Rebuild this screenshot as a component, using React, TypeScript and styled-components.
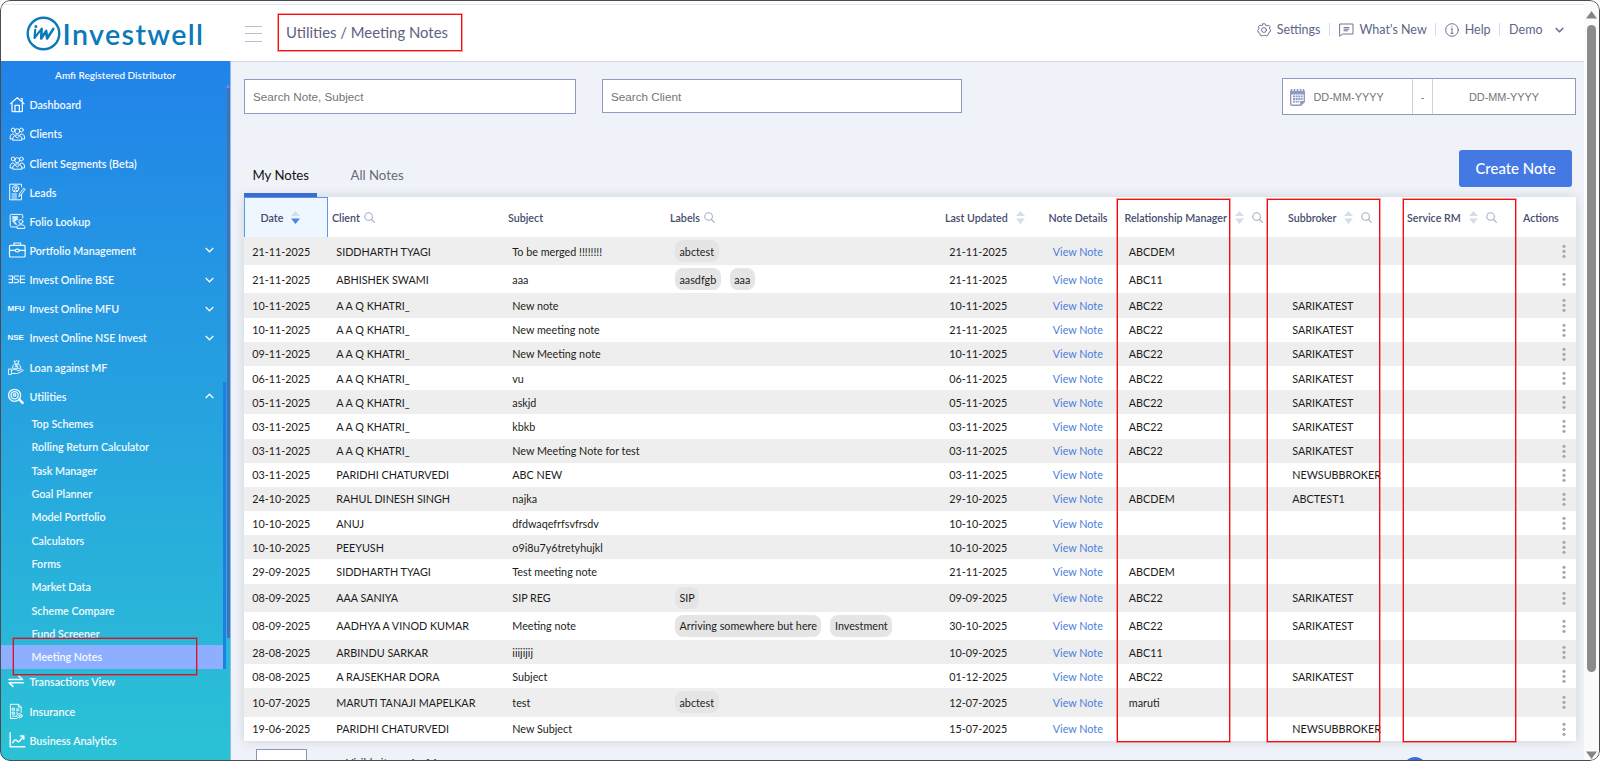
import React from "react";
import styled, { createGlobalStyle, css } from "styled-components";

const GlobalStyle = createGlobalStyle`
  * { box-sizing: border-box; }
  body { margin: 0; background: #fff; font-family: Lato, "Open Sans", sans-serif; }
`;

const Frame = styled.div`
  position: relative;
  display: flex;
  width: 1600px;
  height: 761px;
  overflow: hidden;
  border-radius: 10px;
  background: #eff3f9;
  &::after {
    content: "";
    position: absolute;
    inset: 0;
    border: 1px solid #4c4c50;
    border-radius: 10px;
    pointer-events: none;
  }
`;
const Page = styled.div`
  flex: 1;
  display: flex;
  flex-direction: column;
  min-width: 0;
`;

const Header = styled.header`
  display: flex;
  align-items: center;
  height: 62px;
  flex: none;
  background: #fff;
  border-bottom: 1px solid #d3d8e6;
  box-shadow: inset 0 4px 0 #fdfdff, inset 0 5px 0 #e6e6f2;
`;
const Brand = styled.div`
  display: flex;
  align-items: center;
  width: 245px;
  padding: 6px 0 0 26px;
  color: #0a7ab9;
  svg { flex: none; }
`;
const BrandName = styled.span`
  margin: 0 0 0 1.5px;
  font-size: 28.6px;
  line-height: 34px;
  font-weight: 600;
  letter-spacing: 1.4px;
`;
const Burger = styled.div`
  width: 17px;
  height: 16px;
  margin-top: 6px;
  border-top: 1.5px solid #b9bfd2;
  border-bottom: 1.5px solid #b9bfd2;
  display: flex;
  align-items: center;
  &::after { content: ""; width: 100%; height: 1px; background: #b9bfd2; }
`;
const Crumb = styled.div`
  margin: 3px 0 0 24px;
  font-size: 14.87px;
  color: #5d6180;
  white-space: pre;
`;
const TopNav = styled.nav`
  display: flex;
  align-items: center;
  margin: 0 11.5px 2px auto;
  font-size: 12.5px;
  color: #5d6588;
`;
const NavItem = styled.div<{ $gap?: number }>`
  display: flex;
  align-items: center;
  gap: ${(p) => p.$gap ?? 5.5}px;
  height: 13px;
  padding: 0 8.5px 0 9px;
  & + & { border-left: 1px solid #d9dce8; }
  white-space: nowrap;
`;

const Body = styled.div`
  display: flex;
  flex: 1;
  min-height: 0;
`;
const Sidebar = styled.aside`
  position: relative;
  display: flex;
  flex-direction: column;
  width: 231px;
  flex: none;
  margin-top: -1px;
  padding-top: 29.2px;
  background: linear-gradient(#2183e9, #2bc2d5);
  border-right: 1px solid #8fbde6;
  color: #f4faff;
`;
const Role = styled.div`
  position: absolute;
  top: 7px;
  left: 0;
  width: 231px;
  text-align: center;
  font-size: 9.97px;
  line-height: 14px;
  font-weight: 600;
`;
const MenuItem = styled.div`
  display: flex;
  align-items: center;
  height: 29.15px;
  flex: none;
  padding: 0 16.5px 0 8px;
  font-size: 10.75px;
  font-weight: 600;
`;
const IconSlot = styled.span`
  display: flex;
  align-items: center;
  width: 21.4px;
  flex: none;
`;
const Exchange = styled.span`
  font: 700 8px "Liberation Sans", sans-serif;
  margin-left: -0.5px;
`;
const Chevron = styled.svg`
  margin-left: auto;
`;
const SubMenu = styled.div`
  position: relative;
  width: 226px;
  flex: none;
  border-right: 3px solid #1b7fe8;
  margin: -28.5px 0 -1.2px;
  padding-top: 29.6px;
`;
const SubItem = styled.div<{ $active?: boolean }>`
  display: flex;
  align-items: center;
  height: 23.35px;
  padding-left: 31.5px;
  font-size: 10.72px;
  font-weight: 600;
  ${(p) => p.$active && css`background: #8eafff;`}
`;
const SideScroll = styled.div`
  position: absolute;
  top: 27px;
  right: 0;
  width: 3px;
  height: 550px;
  background: #4272b4;
  &::before {
    content: "";
    position: absolute;
    top: -4px;
    right: 0;
    border: 2px solid transparent;
    border-top: 0;
    border-bottom: 4px solid #7c85d8;
  }
`;

const Main = styled.main`
  display: flex;
  flex-direction: column;
  flex: 1;
  min-width: 0;
  padding: 16px 8px 0 13px;
  & > * { flex-shrink: 0; }
`;
const Filters = styled.div`
  display: flex;
  align-items: flex-start;
`;
const Field = styled.div<{ $w: number; $h: number }>`
  display: flex;
  align-items: center;
  width: ${(p) => p.$w}px;
  height: ${(p) => p.$h}px;
  margin: 1px 26px 0 0;
  padding-left: 8px;
  border: 1px solid #8d9bc0;
  background: #fff;
  color: #757575;
  font: 11.7px "Liberation Sans", Arial, sans-serif;
`;
const DateRange = styled.div`
  display: flex;
  width: 294px;
  height: 37px;
  margin-left: auto;
  border: 1px solid #8d9bc0;
  background: #fff;
  color: #757575;
  font: 10.9px "Liberation Sans", Arial, sans-serif;
`;
const DateCell = styled.div<{ $w?: number }>`
  display: flex;
  align-items: center;
  justify-content: ${(p) => (p.$w ? "flex-start" : "center")};
  ${(p) => (p.$w ? css`width: ${p.$w}px; padding-left: 6px; gap: 7.5px;` : css`flex: 1;`)}
  padding-top: 1px;
`;
const Dash = styled.div`
  display: flex;
  align-items: center;
  justify-content: center;
  width: 21px;
  border: solid #cbd3e6;
  border-width: 0 1px;
`;
const TabBar = styled.div`
  display: flex;
  height: 82px;
  align-items: flex-end;
`;
const Tab = styled.div<{ $active?: boolean }>`
  width: 73px;
  height: 36px;
  padding: 6px 0 0 8.5px;
  margin-right: 25px;
  font-size: 13.2px;
  color: ${(p) => (p.$active ? "#111" : "#666a78")};
  border-bottom: 4px solid ${(p) => (p.$active ? "#3a70da" : "transparent")};
  white-space: nowrap;
`;
const CreateButton = styled.button`
  width: 113px;
  height: 37px;
  margin: 0 4px 10.5px auto;
  padding: 0;
  border: 0;
  border-radius: 3px;
  background: #4479e4;
  color: #fff;
  font: 500 14.93px Lato, sans-serif;
`;

const Table = styled.div`
  width: 1332px;
  background: #fff;
  box-shadow: 0 0 10px rgba(70, 80, 90, 0.2);
`;
const columns = css`
  display: grid;
  grid-template-columns: 84px 176px 162px 275px 103.5px 76px 163.5px 119px 116px 57px;
`;
const HeadRow = styled.div`
  ${columns}
  height: 40px;
`;
const HeadCell = styled.div<{ $sorted?: boolean }>`
  display: flex;
  align-items: center;
  padding-left: 4px;
  gap: 8px;
  color: #444c6e;
  font-size: 10.68px;
  font-weight: 600;
  white-space: nowrap;
  ${(p) =>
    p.$sorted &&
    css`
      padding-left: 15.5px;
      background: #eef6ff;
      border: solid #5e95e8;
      border-width: 1px 1px 0;
    `}
`;
const SearchOnly = styled.span`
  display: flex;
  margin-left: -4px;
`;
const Row = styled.div<{ $tall: boolean }>`
  ${columns}
  height: ${(p) => (p.$tall ? 28.2 : 24.2)}px;
  color: #1c1c20;
  font-size: 10.77px;
  &:nth-child(even) { background: #eeeeee; }
`;
const Cell = styled.div`
  display: flex;
  align-items: center;
  gap: 9px;
  padding-left: 8.3px;
  white-space: nowrap;
`;
const LabelCell = styled(Cell)`
  padding-left: 9px;
`;
const Link = styled.a`
  color: #4a7de0;
`;
const Pill = styled.span`
  display: flex;
  align-items: center;
  height: 22px;
  padding: 0 4.5px;
  border-radius: 8px;
  background: #e5e5e5;
`;
const ActionCell = styled(Cell)`
  padding-left: 42.7px;
`;
const Pager = styled.div`
  display: flex;
  align-items: flex-start;
  padding: 8px 149px 0 12px;
  font-size: 11px;
  color: #333;
`;
const PageSize = styled.div`
  width: 51px;
  height: 24px;
  border: 1px solid #8d93bf;
  background: #fff;
`;
const PageInfo = styled.div`
  margin: 7px 0 0 39px;
`;
const PageDot = styled.div`
  width: 24px;
  height: 24px;
  margin: 8px 0 0 auto;
  border-radius: 50%;
  background: #3a70da;
`;

const Scrollbar = styled.div`
  display: flex;
  flex-direction: column;
  align-items: center;
  width: 16px;
  flex: none;
  padding: 11px 1px 2px 0;
  background: #fbfbfc;
`;
const Thumb = styled.div`
  width: 9.5px;
  height: 647px;
  margin: 6px 0 auto;
  border-radius: 5px;
  background: #8b8b8b;
`;

const Marker = styled.div<{ $x: number; $y: number; $w: number; $h: number; $dark?: boolean }>`
  position: absolute;
  left: ${(p) => p.$x}px;
  top: ${(p) => p.$y}px;
  width: ${(p) => p.$w}px;
  height: ${(p) => p.$h}px;
  border: 1px solid ${(p) => (p.$dark ? "#d3122c" : "#fb0a0e")};
  box-shadow: 0 0 0 1px rgba(240, 20, 20, 0.4);
  pointer-events: none;
`;

const Svg = ({ s = 16, w = 1.1, vb = 16, children }: { s?: number; w?: number; vb?: number; children: React.ReactNode }) => (
  <svg width={s} height={s} viewBox={`0 0 ${vb} ${vb}`} fill="none" stroke="currentColor" strokeWidth={w} strokeLinecap="round" strokeLinejoin="round">
    {children}
  </svg>
);

const HomeIcon = () => (
  <Svg s={18} vb={18} w={1.25}>
    <path d="M2.5 7.6 9.2 1.7l6.8 5.9M4 7v7.7q0 1 1 1h8.4q1 0 1-1V7M7 15.5V9.3h4.4v6.2M12.9 2.6h1.3v2.7" />
  </Svg>
);
const PeopleIcon = () => (
  <Svg s={18} vb={18} w={1}>
    <circle cx="9.3" cy="6.2" r="2.5" />
    <circle cx="5.2" cy="5" r="1.9" />
    <circle cx="13.4" cy="5" r="1.9" />
    <path d="M4.7 14.8q-.3-4.7 4.6-4.9 4.9.2 4.6 4.9zM4.6 14H2q-.6-4.6 2.7-5.2l1.6.9M14 14h2.6q.6-4.6-2.7-5.2l-1.6.9M7 11l2.3 2 2.3-2" />
  </Svg>
);
const LeadsIcon = () => (
  <Svg s={18} vb={18} w={1}>
    <path d="M13.5 11v5.8H1.7V1.2h11.8V4M4 11h4.5M4 13h4.5M4 15h4.5M11 13.2l.5-2.4 4.2-5.6 1.5 1.1-4.2 5.6z" />
    <circle cx="7.6" cy="5.7" r="3.2" />
    <circle cx="7.6" cy="4.9" r="1" />
    <path d="M5.7 8q1.9-2.6 3.8 0" />
  </Svg>
);
const FolioIcon = () => (
  <Svg s={18} vb={18} w={1}>
    <path d="M8.5 15H3.6q-1.4 0-1.4-1.4V3.8q0-1.4 1.4-1.4h9.8q1.4 0 1.4 1.4V6M9 16v-1.4q.3-1.8 3.9-1.9 3.7.1 3.9 1.9V16z" />
    <circle cx="12.9" cy="9.6" r="2" />
    <path d="M4.6 5h5M4.6 7h5M5 5q3.2 0 3.2 2T5 9l3.2 3.3" strokeWidth="1.3" />
  </Svg>
);
const CaseIcon = () => (
  <Svg s={18} vb={18} w={1.2}>
    <rect x="1.5" y="4.4" width="15.6" height="11.6" rx="1" />
    <path d="M6 4V2h6.5v2M1.5 9.3h5.7M11.4 9.3h5.7" />
    <ellipse cx="9.3" cy="9.6" rx="2.1" ry="1.4" />
  </Svg>
);
const Bse = styled.svg`
  margin-left: -0.5px;
`;
const BseIcon = () => (
  <Bse width="17" height="9" viewBox="0 0 17 9" fill="none" stroke="currentColor" strokeWidth="1.1">
    <path d="M.5 1h4v6.6h-4M.5 4.3h4M11 1H7.2q-1.2 0-1.2 1.6t1.2 1.7h2q1.3 0 1.3 1.6T9.2 7.6H5.8M17 1h-4.6v6.6H17M12.4 4.3H17" />
  </Bse>
);
const LoanIcon = () => (
  <Svg s={17} vb={17} w={0.9}>
    <path d="M7 4.5 6 1.8l1.6.7 1-1.2 1 1.2 1.5-.7-1 2.7zM7 4.5q-2.8 2-2.6 4.8h8.5q-.1-2.8-2.7-4.8M7.4 6h2.4M7.4 7.2h2.4M8 6l1.5 2.6M.8 10h2.6v5.5H.8zM3.4 14.5h6.2l5.7-3q-.6-1.5-2.4-.8l-3 1.3q-.2-1.5-2-1.5H5.5l-2.1 1" />
  </Svg>
);
const UtilitiesIcon = () => (
  <Svg s={17} vb={17} w={1.3}>
    <circle cx="6.6" cy="7.3" r="6" />
    <circle cx="6.6" cy="7.3" r="3.6" />
    <circle cx="6.6" cy="6.9" r="1.2" />
    <path d="m11.4 11.6 3.2 3.2" strokeWidth="2.6" />
  </Svg>
);
const SwapIcon = () => (
  <Svg s={17} vb={17} w={1.6}>
    <path d="M1 6.5h13.5L10.8 3M15.5 9.8H1.2L5 13.3" />
  </Svg>
);
const InsuranceIcon = () => (
  <Svg s={17} vb={17} w={1}>
    <path d="M8.6 15.5H2.4V1.3h8.2l2.6 2.6V9.5M10.4 1.5v2.6h2.6M4.5 5.2h2v2h-2zM4.5 9.2h2v2h-2zM8.4 6h2.4M8.4 7.7h2.4M8.4 10h1M4.5 13.2h3.6" />
    <ellipse cx="11.4" cy="12.8" rx="2.8" ry="2" />
    <circle cx="11.4" cy="12.8" r=".6" />
  </Svg>
);
const AnalyticsIcon = () => (
  <Svg s={18} vb={18} w={1.5}>
    <path d="M2.2 1.8v14h14.6M4.8 11.6q2-3.8 3.7-2.2 2 2.6 3.6.2L15.6 5.4M12.4 5h3.4v3.3" />
  </Svg>
);

const Magnifier = () => (
  <svg width="11" height="11" viewBox="0 0 11 11" fill="none" stroke="#a3afcd" strokeWidth="1.1" strokeLinecap="round">
    <circle cx="4.6" cy="4.5" r="3.8" />
    <path d="m7.5 7.5 2.8 2.8" />
  </svg>
);
const Sort = ({ active }: { active?: boolean }) => (
  <svg width="9" height="13" viewBox="0 0 9 13">
    <path d="M4.5 0 9 5H0z" fill="#d5dee6" />
    <path d="M4.5 13 9 7.5H0z" fill={active ? "#4d84ea" : "#d5dee6"} />
  </svg>
);
const Kebab = () => (
  <svg width="4" height="14" viewBox="0 0 4 14" fill="#a9a9a9">
    <circle cx="2" cy="2.3" r="1.6" />
    <circle cx="2" cy="7.3" r="1.6" />
    <circle cx="2" cy="12.3" r="1.6" />
  </svg>
);
const Chev = ({ up }: { up?: boolean }) => (
  <Chevron width="9" height="6" viewBox="0 0 9 6" fill="none" stroke="currentColor" strokeWidth="1.3">
    <path d={up ? "M.7 5 4.5 1.2 8.3 5" : "M.7 1l3.8 3.8L8.3 1"} />
  </Chevron>
);

const Logo = () => (
  <svg width="35" height="35" viewBox="0 0 35 35" fill="none" stroke="currentColor" strokeLinecap="round" strokeLinejoin="round">
    <circle cx="17.5" cy="17.5" r="15.8" strokeWidth="2.4" />
    <path d="M9.2 13.8 8.5 22l7.3-9.3" strokeWidth="2.1" />
    <path d="m15.6 14-.4 8.5 5-7.6.9 7.6 6.2-9.6" strokeWidth="2.6" />
    <circle cx="9.9" cy="10.4" r=".8" strokeWidth="1.4" />
  </svg>
);

const menu: { label: string; icon: React.ReactNode; chev?: boolean }[] = [
  { label: "Dashboard", icon: <HomeIcon /> },
  { label: "Clients", icon: <PeopleIcon /> },
  { label: "Client Segments (Beta)", icon: <PeopleIcon /> },
  { label: "Leads", icon: <LeadsIcon /> },
  { label: "Folio Lookup", icon: <FolioIcon /> },
  { label: "Portfolio Management", icon: <CaseIcon />, chev: true },
  { label: "Invest Online BSE", icon: <BseIcon />, chev: true },
  { label: "Invest Online MFU", icon: <Exchange>MFU</Exchange>, chev: true },
  { label: "Invest Online NSE Invest", icon: <Exchange>NSE</Exchange>, chev: true },
  { label: "Loan against MF", icon: <LoanIcon /> },
];
const subItems = ["Top Schemes", "Rolling Return Calculator", "Task Manager", "Goal Planner", "Model Portfolio", "Calculators", "Forms", "Market Data", "Scheme Compare", "Fund Screener", "Meeting Notes"];
const lower = [
  { label: "Transactions View", icon: <SwapIcon /> },
  { label: "Insurance", icon: <InsuranceIcon /> },
  { label: "Business Analytics", icon: <AnalyticsIcon /> },
];

type Note = [date: string, client: string, subject: string, labels: string[], updated: string, rm: string, sub: string];
const notes: Note[] = [
  ["21-11-2025", "SIDDHARTH TYAGI", "To be merged !!!!!!!!", ["abctest"], "21-11-2025", "ABCDEM", ""],
  ["21-11-2025", "ABHISHEK SWAMI", "aaa", ["aasdfgb", "aaa"], "21-11-2025", "ABC11", ""],
  ["10-11-2025", "A A Q KHATRI_", "New note", [], "10-11-2025", "ABC22", "SARIKATEST"],
  ["10-11-2025", "A A Q KHATRI_", "New meeting note", [], "21-11-2025", "ABC22", "SARIKATEST"],
  ["09-11-2025", "A A Q KHATRI_", "New Meeting note", [], "10-11-2025", "ABC22", "SARIKATEST"],
  ["06-11-2025", "A A Q KHATRI_", "vu", [], "06-11-2025", "ABC22", "SARIKATEST"],
  ["05-11-2025", "A A Q KHATRI_", "askjd", [], "05-11-2025", "ABC22", "SARIKATEST"],
  ["03-11-2025", "A A Q KHATRI_", "kbkb", [], "03-11-2025", "ABC22", "SARIKATEST"],
  ["03-11-2025", "A A Q KHATRI_", "New Meeting Note for test", [], "03-11-2025", "ABC22", "SARIKATEST"],
  ["03-11-2025", "PARIDHI CHATURVEDI", "ABC NEW", [], "03-11-2025", "", "NEWSUBBROKER"],
  ["24-10-2025", "RAHUL DINESH SINGH", "najka", [], "29-10-2025", "ABCDEM", "ABCTEST1"],
  ["10-10-2025", "ANUJ", "dfdwaqefrfsvfrsdv", [], "10-10-2025", "", ""],
  ["10-10-2025", "PEEYUSH", "o9i8u7y6tretyhujkl", [], "10-10-2025", "", ""],
  ["29-09-2025", "SIDDHARTH TYAGI", "Test meeting note", [], "21-11-2025", "ABCDEM", ""],
  ["08-09-2025", "AAA SANIYA", "SIP REG", ["SIP"], "09-09-2025", "ABC22", "SARIKATEST"],
  ["08-09-2025", "AADHYA A VINOD KUMAR", "Meeting note", ["Arriving somewhere but here", "Investment"], "30-10-2025", "ABC22", "SARIKATEST"],
  ["28-08-2025", "ARBINDU SARKAR", "iiijijij", [], "10-09-2025", "ABC11", ""],
  ["08-08-2025", "A RAJSEKHAR DORA", "Subject", [], "01-12-2025", "ABC22", "SARIKATEST"],
  ["10-07-2025", "MARUTI TANAJI MAPELKAR", "test", ["abctest"], "12-07-2025", "maruti", ""],
  ["19-06-2025", "PARIDHI CHATURVEDI", "New Subject", [], "15-07-2025", "", "NEWSUBBROKER"],
];

export default function App() {
  return (
    <>
      <GlobalStyle />
      <Frame>
        <Page>
          <Header>
            <Brand>
              <Logo />
              <BrandName>Investwell</BrandName>
            </Brand>
            <Burger />
            <Crumb>Utilities / Meeting Notes</Crumb>
            <TopNav>
              <NavItem>
                <Svg s={14} vb={14} w={0.9}>
                  <circle cx="7" cy="7" r="2.4" />
                  <path d="M5.8.8h2.4l.5 1.5 1.3.5 1.5-.7 1.5 1.6-.6 1.4.5 1.2.8.7-.7 2-1 .4-.7 1.4-.2 1.3-1.7.9-1.2-.6H6.3L5 13l-1.8-.9L3 10.8l-.9-1.2-1-.5-.4-2 .9-.8.4-1.2-.6-1.4 1.4-1.6 1.5.6 1.1-.4z" />
                </Svg>
                Settings
              </NavItem>
              <NavItem>
                <Svg s={15} vb={15} w={0.9}>
                  <path d="M1 2h13v10H3.8L1 14zM5 5.6h5M5 7.2h5M5 8.8h3.5" />
                </Svg>
                What's New
              </NavItem>
              <NavItem>
                <Svg s={14} vb={14} w={0.9}>
                  <circle cx="7" cy="7" r="6.3" />
                  <path d="M7 6v4.2M6.2 6H7M6 10.3h2M7 3.6v.3" />
                </Svg>
                Help
              </NavItem>
              <NavItem $gap={12.5}>
                Demo
                <Chev />
              </NavItem>
            </TopNav>
          </Header>
          <Body>
            <Sidebar>
              <Role>Amfi Registered Distributor</Role>
              {menu.map((m) => (
                <MenuItem key={m.label}>
                  <IconSlot>{m.icon}</IconSlot>
                  {m.label}
                  {m.chev && <Chev />}
                </MenuItem>
              ))}
              <MenuItem>
                <IconSlot><UtilitiesIcon /></IconSlot>
                Utilities
                <Chev up />
              </MenuItem>
              <SubMenu>
                {subItems.map((s) => (
                  <SubItem key={s} $active={s === "Meeting Notes"}>{s}</SubItem>
                ))}
              </SubMenu>
              {lower.map((m) => (
                <MenuItem key={m.label}>
                  <IconSlot>{m.icon}</IconSlot>
                  {m.label}
                </MenuItem>
              ))}
              <SideScroll />
            </Sidebar>
            <Main>
              <Filters>
                <Field $w={332} $h={35}>Search Note, Subject</Field>
                <Field $w={360} $h={34}>Search Client</Field>
                <DateRange>
                  <DateCell $w={129}>
                    <svg width="17" height="19" viewBox="0 0 17 19">
                      <path d="M1 3h15v11l-4 4H3q-2 0-2-2z" fill="#8e9ac0" />
                      <path d="M2.4 6.5h12.2V13h-3.4v3.6H2.4z" fill="#fff" />
                      <path d="M2.5 1v3M5.5 1v3M8.5 1v3M11.5 1v3M14.5 1v3" stroke="#8e9ac0" strokeWidth="1.6" />
                      <path d="M4 8.3h9.6M4 11h9.6M4 13.7h6.4" stroke="#8e9ac0" strokeWidth="1.8" strokeDasharray="2 .6" />
                    </svg>
                    DD-MM-YYYY
                  </DateCell>
                  <Dash>-</Dash>
                  <DateCell>DD-MM-YYYY</DateCell>
                </DateRange>
              </Filters>
              <TabBar>
                <Tab $active>My Notes</Tab>
                <Tab>All Notes</Tab>
                <CreateButton>Create Note</CreateButton>
              </TabBar>
              <Table>
                <HeadRow>
                  <HeadCell $sorted>Date<Sort active /></HeadCell>
                  <HeadCell>Client<SearchOnly><Magnifier /></SearchOnly></HeadCell>
                  <HeadCell>Subject</HeadCell>
                  <HeadCell>Labels<SearchOnly><Magnifier /></SearchOnly></HeadCell>
                  <HeadCell>Last Updated<Sort /></HeadCell>
                  <HeadCell>Note Details</HeadCell>
                  <HeadCell>Relationship Manager<Sort /><Magnifier /></HeadCell>
                  <HeadCell>Subbroker<Sort /><Magnifier /></HeadCell>
                  <HeadCell>Service RM<Sort /><Magnifier /></HeadCell>
                  <HeadCell>Actions</HeadCell>
                </HeadRow>
                {notes.map(([date, client, subject, labels, updated, rm, sub], i) => (
                  <Row key={i} $tall={labels.length > 0}>
                    <Cell>{date}</Cell>
                    <Cell>{client}</Cell>
                    <Cell>{subject}</Cell>
                    <LabelCell>{labels.map((l) => <Pill key={l}>{l}</Pill>)}</LabelCell>
                    <Cell>{updated}</Cell>
                    <Cell><Link>View Note</Link></Cell>
                    <Cell>{rm}</Cell>
                    <Cell>{sub}</Cell>
                    <Cell />
                    <ActionCell><Kebab /></ActionCell>
                  </Row>
                ))}
              </Table>
              <Pager>
                <PageSize />
                <PageInfo>Visible items 1 of 1</PageInfo>
                <PageDot />
              </Pager>
            </Main>
          </Body>
        </Page>
        <Scrollbar>
          <svg width="11" height="8" viewBox="0 0 11 8"><path d="M5.5 0 11 7.5H0z" fill="#858585" /></svg>
          <Thumb />
          <svg width="11" height="8" viewBox="0 0 11 8"><path d="M5.5 8 11 .5H0z" fill="#858585" /></svg>
        </Scrollbar>
        <Marker $x={278} $y={14} $w={184} $h={37} />
        <Marker $x={13} $y={638} $w={184} $h={37} $dark />
        <Marker $x={1117} $y={199} $w={113} $h={543} />
        <Marker $x={1267} $y={199} $w={113} $h={543} />
        <Marker $x={1403} $y={199} $w={113} $h={543} />
      </Frame>
    </>
  );
}
